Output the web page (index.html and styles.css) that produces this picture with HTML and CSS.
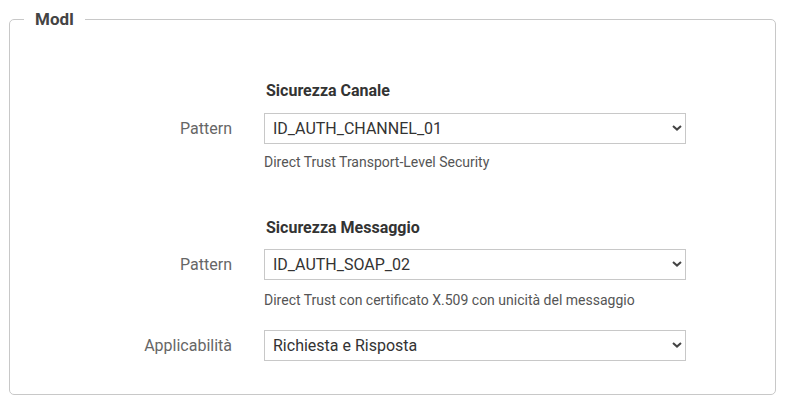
FILE: index.html
```html
<!DOCTYPE html>
<html lang="it">
<head>
<meta charset="utf-8">
<title>ModI</title>
<link rel="stylesheet" href="styles.css">
</head>
<body>
<fieldset class="panel">
  <legend class="panel-legend">ModI</legend>

  <div class="section">
    <div class="form-row">
      <div></div>
      <h3 class="section-title">Sicurezza Canale</h3>
    </div>
    <div class="form-row">
      <label class="field-label" for="p1">Pattern</label>
      <div class="field">
        <div class="select-wrap">
          <select id="p1" class="select"><option>ID_AUTH_CHANNEL_01</option></select>
          <svg class="chev" width="10" height="6" viewBox="0 0 10 6"><path d="M1 1 L5 4.6 L9 1" fill="none" stroke="#444" stroke-width="2"/></svg>
        </div>
        <div class="help">Direct Trust Transport-Level Security</div>
      </div>
    </div>
  </div>

  <div class="section section-2">
    <div class="form-row">
      <div></div>
      <h3 class="section-title title-2">Sicurezza Messaggio</h3>
    </div>
    <div class="form-row">
      <label class="field-label" for="p2">Pattern</label>
      <div class="field">
        <div class="select-wrap">
          <select id="p2" class="select"><option>ID_AUTH_SOAP_02</option></select>
          <svg class="chev" width="10" height="6" viewBox="0 0 10 6"><path d="M1 1 L5 4.6 L9 1" fill="none" stroke="#444" stroke-width="2"/></svg>
        </div>
        <div class="help help-2">Direct Trust con certificato X.509 con unicità del messaggio</div>
      </div>
    </div>
    <div class="form-row row-3">
      <label class="field-label" for="p3">Applicabilità</label>
      <div class="field">
        <div class="select-wrap">
          <select id="p3" class="select"><option>Richiesta e Risposta</option></select>
          <svg class="chev" width="10" height="6" viewBox="0 0 10 6"><path d="M1 1 L5 4.6 L9 1" fill="none" stroke="#444" stroke-width="2"/></svg>
        </div>
      </div>
    </div>
  </div>
</fieldset>
</body>
</html>
```

FILE: styles.css
```css
html, body {
  margin: 0;
  padding: 0;
  background: #fff;
  font-family: Roboto, "Liberation Sans", Arial, sans-serif;
  color: #333;
}

.panel {
  box-sizing: border-box;
  margin: 9px 0 0 9px;
  width: 767px;
  height: 386px;
  border: 1px solid #c8c8c8;
  border-radius: 5px;
  padding: 0;
}

.panel-legend {
  margin-left: 14px;
  padding: 0 11px;
  font-size: 17px;
  font-weight: 700;
  line-height: 20px;
  color: #444;
}

.section {
  margin-top: 52px;
}

.section-2 {
  margin-top: 46px;
}

.form-row {
  display: grid;
  grid-template-columns: 222px 422px;
  column-gap: 32px;
  align-items: start;
}

.row-3 {
  margin-top: 20px;
}

.section-title {
  margin: 0 0 12px 2px;
  font-size: 16px;
  line-height: 20px;
  font-weight: 700;
  color: #333;
}

.title-2 {
  margin-bottom: 11px;
}

.field-label {
  text-align: right;
  font-size: 16px;
  line-height: 31px;
  color: #666;
}

.select-wrap {
  position: relative;
  height: 31px;
}

.select {
  appearance: none;
  -webkit-appearance: none;
  box-sizing: border-box;
  width: 422px;
  height: 31px;
  margin: 0;
  border: 1px solid #c8c8c8;
  border-radius: 0;
  background: #fff;
  padding: 0 30px 0 8px;
  font-family: Roboto, "Liberation Sans", Arial, sans-serif;
  font-size: 16px;
  color: #333;
}

.chev {
  position: absolute;
  right: 4px;
  top: 12px;
}

.help {
  margin-top: 8px;
  font-size: 14px;
  line-height: 20px;
  color: #555;
}

.help-2 {
  margin-top: 10px;
}
```
